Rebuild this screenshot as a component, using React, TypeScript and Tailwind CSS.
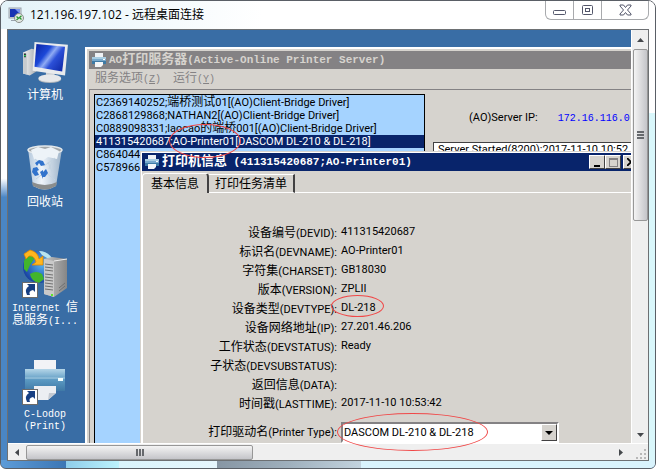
import React from "react";

const listItems = [
  { pre: "C2369140252;", cn: "端桥测试", post: "01[(AO)Client-Bridge Driver]" },
  { pre: "C2868129868;NATHAN2[(AO)Client-Bridge Driver]" },
  { pre: "C0889098331;laocao", cn: "的端桥", post: "001[(AO)Client-Bridge Driver]" },
  { pre: "411315420687;AO-Printer01[DASCOM DL-210 & DL-218]", selected: true },
  { pre: "C864044" },
  { pre: "C578966" },
];

const fields = [
  ["设备编号", "(DEVID):", "411315420687"],
  ["标识名", "(DEVNAME):", "AO-Printer01"],
  ["字符集", "(CHARSET):", "GB18030"],
  ["版本", "(VERSION):", "ZPLII"],
  ["设备类型", "(DEVTYPE):", "DL-218"],
  ["设备网络地址", "(IP):", "27.201.46.206"],
  ["工作状态", "(DEVSTATUS):", "Ready"],
  ["子状态", "(DEVSUBSTATUS):", ""],
  ["返回信息", "(DATA):", ""],
  ["时间戳", "(LASTTIME):", "2017-11-10 10:53:42"],
];

const tahoma = "font-['Roboto','Noto_Sans_CJK_SC',sans-serif]";
const simsun = "font-['Liberation_Mono','Noto_Sans_CJK_SC',monospace]";

function RemoteIcon() {
  return (
    <svg width="16" height="16" viewBox="0 0 16 16" aria-hidden="true">
      <rect x="1" y="1" width="12" height="10" fill="#d8dce0" stroke="#9aa3ad" />
      <rect x="2" y="2" width="10" height="8" fill="#1734b4" />
      <path d="M7 2h5v5z" fill="#7a96ee" />
      <path d="M3 13h5v1H3z" fill="#9aa3ad" />
      <circle cx="11" cy="11" r="4.5" fill="#e4e8e4" stroke="#8c918c" />
      <path d="M8.500 9.500l2 1.800-2 1.800M13.500 8.800l-2 1.800 2 1.800" fill="none" stroke="#2c9a35" strokeWidth="1.3" />
    </svg>
  );
}

function PrinterSmall() {
  return (
    <svg width="16" height="16" viewBox="0 0 16 16" className="shrink-0" aria-hidden="true">
      <path d="M4 1h8v5H4z" fill="#eef1f5" />
      <path d="M1 5h14v7H1z" fill="#78a9cc" />
      <path d="M1 5h14v2H1z" fill="#a9cde2" />
      <path d="M1 9h14v3H1z" fill="#3f7ba6" />
      <path d="M4 10h8v3l-2 2H4z" fill="#f4f6f8" />
      <path d="M12 7h2v1h-2z" fill="#fff" />
    </svg>
  );
}

function ComputerIcon() {
  return (
    <svg width="46" height="42" viewBox="0 0 48 44" aria-hidden="true">
      <defs>
        <linearGradient id="scr" x1="0" y1="0" x2="1" y2=".7">
          <stop offset="0" stopColor="#0a22a0" />
          <stop offset=".4" stopColor="#1c48d8" />
          <stop offset=".55" stopColor="#8fabf4" />
          <stop offset=".7" stopColor="#2c50d8" />
          <stop offset="1" stopColor="#1430b0" />
        </linearGradient>
        <linearGradient id="tower" x1="0" x2="1">
          <stop offset="0" stopColor="#f4f4f4" />
          <stop offset="1" stopColor="#a8adb2" />
        </linearGradient>
      </defs>
      <path d="M1 11l9-4 5 1v23l-7 4-7-2z" fill="url(#tower)" />
      <path d="M1 11l4 1v22l-4-1z" fill="#c7cbce" />
      <path d="M2 12h2v4H2z" fill="#263238" />
      <path d="M2 14h2v1H2z" fill="#3f6" />
      <path d="M25 31l9 1v6h-9z" fill="#c9cdd1" />
      <ellipse cx="29" cy="39" rx="12" ry="4" fill="#aeb5bb" />
      <ellipse cx="29" cy="38" rx="12" ry="4" fill="#e6e8ea" />
      <path d="M13 0l35 3-3 32-34-5z" fill="#e9ebed" />
      <path d="M15 2l30 3-3 26-29-5z" fill="url(#scr)" />
    </svg>
  );
}

function BinIcon() {
  return (
    <svg width="38" height="46" viewBox="0 0 38 46" aria-hidden="true">
      <defs>
        <linearGradient id="bin" x1="0" x2="1">
          <stop offset="0" stopColor="#b4c8dc" />
          <stop offset=".4" stopColor="#eef4fa" />
          <stop offset="1" stopColor="#9db3c9" />
        </linearGradient>
      </defs>
      <path d="M2 4l5 37q12 7 23 0l6-37z" fill="url(#bin)" />
      <path d="M6 37l1 4q12 7 23 0l1-4q-12 6-25 0z" fill="#8a8d8d" />
      <ellipse cx="19" cy="5" rx="17" ry="4" fill="#a4a8aa" stroke="#e4e9ec" strokeWidth="1.5" />
      <path d="M5 5l7-3 7 2 6-2 8 4-2 8-9-2-6 4-8-2z" fill="#edf3f8" />
      <path d="M9 14l9 7 11-8M10 34l9-7 10 8M22 17l5 12M27 14l-4 10" fill="none" stroke="#c3d3e1" />
      <path d="M9 18l4-3 4 1 2 4-4 1-2-3-2 3zM7 23l4-1 2 3-2 1 2 4-4 1-3-4zM14 27l3-2v2l3-3 2 4-3 4h-2v2z" fill="#3173cc" />
    </svg>
  );
}

function ShortcutArrow() {
  return (
    <g>
      <rect x=".5" y="33.5" width="15" height="15" fill="#fff" stroke="#6a6a6a" />
      <path d="M5 46q-3-6 2-9l-2-2h8v8l-2-2q-5 1-3 5z" fill="#173f82" />
    </g>
  );
}

function InternetIcon() {
  return (
    <svg width="46" height="49" viewBox="0 0 46 49" aria-hidden="true">
      <defs>
        <radialGradient id="globe" cx=".6" cy=".4" r=".65">
          <stop offset="0" stopColor="#58b7f4" />
          <stop offset="1" stopColor="#163e9f" />
        </radialGradient>
        <linearGradient id="srv" x1="0" x2="1">
          <stop offset="0" stopColor="#c4c4c4" />
          <stop offset="1" stopColor="#868686" />
        </linearGradient>
      </defs>
      <circle cx="17" cy="18" r="16" fill="url(#globe)" />
      <path d="M2 12q2-6 7-8l3 6-4 6-3 7-3-3zM8 25q6-4 12 0l2 5-5 4q-8-2-9-9z" fill="#42b52c" />
      <path d="M17 2q8 0 13 7h-5l-5-3z" fill="#b9e4ee" />
      <path d="M2 5l6-4q8 2 9 9l4-3v9H10l4-3q-2-7-7-6l-3 3z" fill="#ffb61e" stroke="#e18700" strokeWidth=".8" />
      <path d="M22 10l8-2 15 2v29l-13 9-10-3z" fill="url(#srv)" />
      <path d="M22 10l10 2v36l-10-3z" fill="#c9c9c9" />
      <path d="M32 12l13-2" stroke="#eee" />
      <path d="M23 15l8 1M23 18l8 1M23 21l8 1M23 25l8 1M23 28l8 1M23 31l8 1M23 34l8 1M23 37l8 1M23 40l8 1" stroke="#707070" />
      <path d="M37 42l6-5M37 39l6-5" stroke="#707070" />
      <path d="M29 45h2v2h-2z" fill="#5eea28" />
      <ShortcutArrow />
    </svg>
  );
}

function PrinterLarge() {
  return (
    <svg width="46" height="49" viewBox="0 0 46 49" aria-hidden="true">
      <defs>
        <linearGradient id="body" x1="0" y1="0" x2="0" y2="1">
          <stop offset="0" stopColor="#b5d6e8" />
          <stop offset=".5" stopColor="#5b99c2" />
          <stop offset="1" stopColor="#3f79a6" />
        </linearGradient>
      </defs>
      <path d="M12 4h22v12H12z" fill="#f2f3f6" />
      <path d="M3 13h40v22H3z" fill="url(#body)" />
      <path d="M3 21h40v2H3z" fill="#89b8d5" />
      <path d="M36 22h5v3h-5z" fill="#f4ffff" />
      <path d="M12 30h22v7l-8 7H12z" fill="#eceef2" />
      <path d="M34 37l-8 7 1-7z" fill="#c4c9d1" />
      <ShortcutArrow />
    </svg>
  );
}

function DesktopIcon({ icon, children }: { icon: React.ReactNode; children: React.ReactNode }) {
  return (
    <button className={`flex h-[107px] w-[74px] flex-col items-center text-[10px] leading-3 text-white ${simsun}`}>
      <span className="flex h-12 items-end">{icon}</span>
      <span className="mt-1 flex flex-col items-center whitespace-pre">{children}</span>
    </button>
  );
}

function ClassicButton({ label, children }: { label: string; children: React.ReactNode }) {
  return (
    <button
      aria-label={label}
      className="flex h-[14px] w-4 items-center justify-center border border-t-white border-r-[#424142] border-b-[#424142] border-l-white bg-[#d6d3ce]"
    >
      {children}
    </button>
  );
}

function AoServerWindow() {
  return (
    <section className="absolute top-[17px] left-[77px] flex h-[440px] w-[620px] flex-col border-2 border-[#d6d3ce] border-t-white border-l-white bg-[#d6d3ce] p-[2px]">
      <header className="flex h-[18px] shrink-0 items-center gap-[2px] bg-[#848284] pl-[2px] text-[#d6d3ce]">
        <PrinterSmall />
        <h1 className={`text-[11px] leading-4 font-bold whitespace-nowrap ${simsun}`}>
          AO<span className="text-[13px]">打印服务器</span>(Active-Online Printer Server)
        </h1>
      </header>
      <nav className={`flex h-5 shrink-0 items-center gap-3 pl-[6px] text-[10px] text-[#848284] ${simsun}`}>
        <button>
          <span className="text-xs">服务选项</span>(<u>Z</u>)
        </button>
        <button>
          <span className="text-xs">运行</span>(<u>Y</u>)
        </button>
      </nav>
      <div className="flex flex-1 border-t border-l border-[#848284] pt-1 pl-1">
        <ul className="w-[331px] border border-black bg-[#a5d3ff] pt-px">
          {listItems.map((it) => (
            <li
              key={it.pre}
              className={`h-[13px] pl-px text-[11px] leading-[13px] whitespace-nowrap ${
                it.selected ? "bg-[#08246b] text-white" : "text-black"
              }`}
            >
              {it.pre}
              {it.cn && <span className="text-xs leading-[13px]">{it.cn}</span>}
              {it.post}
            </li>
          ))}
        </ul>
        <div className="ml-2 flex flex-1 flex-col">
          <p className="flex h-12 items-center gap-5 pl-9 text-[11px]">
            <span>(AO)Server IP:</span>
            <span className={`text-[10px] text-[#0000ff] ${simsun}`}>172.16.116.0</span>
          </p>
          <div className="flex-1 border border-[#424142] bg-white px-1 text-[11px] leading-[14px] whitespace-nowrap">
            Server Started(8200):2017-11-10 10:52
          </div>
        </div>
      </div>
    </section>
  );
}

function PrinterDialog() {
  return (
    <section className="absolute top-[121px] left-[132px] flex h-[340px] w-[502px] flex-col border border-[#d6d3ce] bg-[#d6d3ce]">
      <div className="flex flex-1 flex-col border-t border-l border-white">
        <header className="flex h-[18px] shrink-0 items-center gap-[2px] bg-[#08246b] px-[2px] text-white">
          <PrinterSmall />
          <h2 className={`flex-1 text-[11px] leading-4 font-bold whitespace-pre ${simsun}`}>
            <span className="text-[13px]">打印机信息</span> (411315420687;AO-Printer01)
          </h2>
          <div className="flex">
            <ClassicButton label="最小化">
              <span className="mt-2 h-[2px] w-[6px] bg-black" />
            </ClassicButton>
            <ClassicButton label="最大化">
              <span className="h-[9px] w-[9px] border border-t-2 border-[#848284]" />
            </ClassicButton>
            <span className="w-[2px]" />
            <ClassicButton label="关闭">
              <svg width="8" height="8" viewBox="0 0 8 8" aria-hidden="true">
                <path d="M0 0l8 8M8 0l-8 8" stroke="#000" strokeWidth="1.8" />
              </svg>
            </ClassicButton>
          </div>
        </header>
        <div role="tablist" className="mt-[2px] flex h-5 shrink-0 items-end text-xs">
          <button
            role="tab"
            aria-selected="true"
            className="h-5 w-[67px] rounded-t-sm border-t border-r-2 border-l border-t-white border-r-[#424142] border-l-white leading-4"
          >
            基本信息
          </button>
          <button
            role="tab"
            aria-selected="false"
            className="h-[19px] w-[86px] border-t border-r-2 border-b border-t-white border-r-[#424142] border-b-white leading-4"
          >
            打印任务清单
          </button>
          <span className="flex-1 self-stretch border-b border-white" />
        </div>
        <div className="flex-1 border-l border-white pt-[30px] text-[11px]">
          <dl>
            {fields.map(([cn, en, value]) => (
              <div key={en} className="flex h-[19px] gap-1">
                <dt className="w-[194px] text-right leading-5">
                  <span className="text-xs leading-5">{cn}</span>
                  {en}
                </dt>
                <dd className="leading-[18px]">{value}</dd>
              </div>
            ))}
          </dl>
          <div className="mt-[9px] flex h-[21px] items-center gap-1">
            <label htmlFor="driver" className="w-[194px] text-right whitespace-nowrap">
              <span className="text-xs">打印驱动名</span>(Printer Type):
            </label>
            <div className="relative h-[21px] w-[218px] border-2 border-t-[#848284] border-r-white border-b-white border-l-[#848284] bg-white">
              <select id="driver" className="block h-[17px] w-full appearance-none pl-px leading-[17px]">
                <option>DASCOM DL-210 &amp; DL-218</option>
              </select>
              <span className="pointer-events-none absolute top-0 right-0 flex h-[17px] w-4 items-center justify-center border border-t-white border-r-[#424142] border-b-[#424142] border-l-white bg-[#d6d3ce]">
                <svg width="8" height="4" viewBox="0 0 8 4" aria-hidden="true">
                  <path d="M0 0h8L4 4z" fill="#000" />
                </svg>
              </span>
            </div>
          </div>
        </div>
      </div>
    </section>
  );
}

export default function App() {
  return (
    <main
      className={`relative flex h-screen flex-col overflow-hidden rounded-t-lg rounded-b-md border border-[#5a5f66] bg-linear-to-b from-white from-38% to-[#4a86c4] to-42% ${tahoma} text-black`}
    >
      <span className="absolute top-28 right-0 bottom-0 w-2 bg-[#d9f7fb]" />
      <span className="absolute right-0 bottom-0 left-0 flex h-2">
        <span className="w-[10%] bg-linear-to-r from-[#5d9cd8] to-[#3c76b4]" />
        <span className="w-[8%] bg-linear-to-r from-[#8ecdea] to-[#bdf3fd]" />
        <span className="w-[15%] bg-linear-to-r from-[#d9f4fc] to-[#e6f6fd]" />
        <span className="w-[22%] bg-linear-to-r from-[#8796a4] via-[#9fb0bd] to-[#c3d3de]" />
        <span className="flex-1 bg-[#d9f3fc]" />
      </span>
      <header className="flex h-7 shrink-0 items-start justify-between bg-linear-to-r from-[#e4f3f9] via-white via-40% to-white pr-[17px] pl-[7px]">
        <div className="flex h-7 items-center gap-[6px]">
          <RemoteIcon />
          <h1 className="font-['Open_Sans','Noto_Sans_CJK_SC',sans-serif] text-xs">121.196.197.102 - 远程桌面连接</h1>
        </div>
        <div className="-mr-[11px] flex h-[19px] divide-x divide-[#a8aaad] rounded-b-md border border-t-0 border-[#a8aaad]">
          <button aria-label="最小化" className="flex w-7 items-center justify-center">
            <svg width="13" height="12" viewBox="0 0 13 12" aria-hidden="true">
              <rect x=".5" y="6.5" width="12" height="4" rx="1" fill="#fff" stroke="#53566a" />
            </svg>
          </button>
          <button aria-label="最大化" className="flex w-7 items-center justify-center">
            <svg width="13" height="12" viewBox="0 0 13 12" aria-hidden="true">
              <rect x="1.5" y="1.5" width="10" height="9" rx="1" fill="#fff" stroke="#53566a" />
              <rect x="4.5" y="4.5" width="4" height="3" fill="#fff" stroke="#53566a" />
            </svg>
          </button>
          <button aria-label="关闭" className="flex w-[46px] items-center justify-center">
            <svg width="13" height="12" viewBox="0 0 13 12" aria-hidden="true">
              <path d="M1 1h3.500l2 2.500L8.500 1H12v1L8.500 6 12 10v1H8.500l-2-2.500L4.500 11H1v-1l3.500-4L1 2z" fill="#fff" stroke="#53566a" />
            </svg>
          </button>
        </div>
      </header>

      <div className="relative mx-[6px] mb-[7px] flex min-h-0 flex-1 flex-col border border-[#6d7073] bg-[#f0f0f0]">
        <div className="flex min-h-0 flex-1">
          <div className="relative min-w-0 flex-1 overflow-hidden bg-[#396da5]">
            <div className="flex flex-col pt-[6px]">
              <DesktopIcon icon={<ComputerIcon />}>
                <span className="text-xs leading-4">计算机</span>
              </DesktopIcon>
              <DesktopIcon icon={<BinIcon />}>
                <span className="text-xs leading-4">回收站</span>
              </DesktopIcon>
              <DesktopIcon icon={<InternetIcon />}>
                <span>
                  Internet <span className="text-xs leading-3">信</span>
                </span>
                <span>
                  <span className="text-xs leading-3">息服务</span>(I...
                </span>
              </DesktopIcon>
              <DesktopIcon icon={<PrinterLarge />}>
                <span>C-Lodop</span>
                <span>(Print)</span>
              </DesktopIcon>
            </div>
            <AoServerWindow />
            <PrinterDialog />
          </div>
          <div className="flex w-[17px] flex-col items-center border-l border-white bg-[#efefef]">
            <button aria-label="向上滚动" className="flex h-[19px] items-center">
              <svg width="7" height="4" viewBox="0 0 7 4" aria-hidden="true">
                <path d="M0 4h7L3.500 0z" fill="#45484c" />
              </svg>
            </button>
            <div className="flex h-[172px] w-[15px] flex-col items-center justify-center gap-px rounded-xs border border-[#979797] bg-linear-to-r from-[#f4f4f4] via-[#dcdcde] to-[#c4c5c9]">
              <span className="h-[2px] w-[7px] bg-[#66696d]" />
              <span className="h-[2px] w-[7px] bg-[#66696d]" />
              <span className="h-[2px] w-[7px] bg-[#66696d]" />
            </div>
            <button aria-label="向下滚动" className="mt-auto flex h-4 items-center">
              <svg width="7" height="4" viewBox="0 0 7 4" aria-hidden="true">
                <path d="M0 0h7L3.500 4z" fill="#45484c" />
              </svg>
            </button>
          </div>
        </div>
        <div className="flex h-[17px] shrink-0 items-center border-t border-white bg-[#efefef]">
          <button aria-label="向左滚动" className="flex w-[18px] justify-center">
            <svg width="4" height="7" viewBox="0 0 4 7" aria-hidden="true">
              <path d="M4 0v7L0 3.500z" fill="#45484c" />
            </svg>
          </button>
          <div className="flex h-[15px] w-[227px] items-center justify-center gap-px rounded-xs border border-[#979797] bg-linear-to-b from-[#f4f4f4] via-[#dcdcde] to-[#c4c5c9]">
            <span className="h-[7px] w-[2px] bg-[#66696d]" />
            <span className="h-[7px] w-[2px] bg-[#66696d]" />
            <span className="h-[7px] w-[2px] bg-[#66696d]" />
          </div>
          <button aria-label="向右滚动" className="mr-[7px] ml-auto flex w-4 justify-center">
            <svg width="4" height="7" viewBox="0 0 4 7" aria-hidden="true">
              <path d="M0 0v7l4-3.500z" fill="#45484c" />
            </svg>
          </button>
          <svg width="11" height="11" viewBox="0 0 11 11" className="mt-1 mr-px" aria-hidden="true">
            <path d="M8 0h2v2H8zM8 4h2v2H8zM4 4h2v2H4zM8 8h2v2H8zM4 8h2v2H4zM0 8h2v2H0z" fill="#b8b8b8" />
          </svg>
        </div>
        <span className="pointer-events-none absolute top-[94px] left-[161px] h-[34px] w-[72px] rounded-[50%] border border-[#f04848]" />
        <span className="pointer-events-none absolute top-[265px] left-[323px] h-[22px] w-[53px] rounded-[50%] border border-[#f04848]" />
        <span className="pointer-events-none absolute top-[383px] left-[329px] h-[38px] w-[151px] rounded-[50%] border border-[#f04848]" />
      </div>
    </main>
  );
}
